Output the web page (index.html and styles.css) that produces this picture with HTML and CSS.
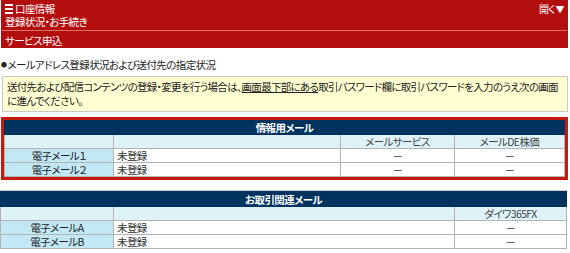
FILE: index.html
```html
<!DOCTYPE html>
<html lang="ja">

<head>
    <meta charset="UTF-8">
    <meta name="viewport" content="width=device-width, initial-scale=1.0">
    <title>登録状況・お手続き</title>
    <link rel="stylesheet" href="styles.css">
</head>

<body>
    <div class="hdr">
        <div class="hdrTop">
            <span class="menu"><i></i><i></i><i></i></span>
            <span class="hdrTitle">口座情報</span>
            <span class="open">開く<b>▼</b></span>
        </div>
        <div class="hdrSub">登録状況・お手続き</div>
        <div class="hdrLine"></div>
        <div class="hdrSub">サービス申込</div>
    </div>

    <p class="secTitle"><span class="dot">●</span>メールアドレス登録状況および送付先の指定状況</p>

    <div class="notice">
        送付先および配信コンテンツの登録・変更を行う場合は、<u>画面最下部にある</u>取引パスワード欄に取引パスワードを入力のうえ次の画面に進んでください。
    </div>

    <div class="redBox">
        <table class="mailTbl">
            <colgroup>
                <col class="w109">
                <col>
                <col class="w114">
                <col class="w110">
            </colgroup>
            <tr class="head">
                <th colspan="4">情報用メール</th>
            </tr>
            <tr class="sub">
                <td></td>
                <td></td>
                <td>メールサービス</td>
                <td>メールDE株価</td>
            </tr>
            <tr>
                <td class="label">電子メール１</td>
                <td>未登録</td>
                <td class="dash">－</td>
                <td class="dash">－</td>
            </tr>
            <tr>
                <td class="label">電子メール２</td>
                <td>未登録</td>
                <td class="dash">－</td>
                <td class="dash">－</td>
            </tr>
        </table>
    </div>

    <div class="grayBox">
        <table class="mailTbl">
            <colgroup>
                <col class="w113">
                <col>
                <col class="w112">
            </colgroup>
            <tr class="head">
                <th colspan="3">お取引関連メール</th>
            </tr>
            <tr class="sub">
                <td></td>
                <td></td>
                <td>ダイワ365FX</td>
            </tr>
            <tr>
                <td class="label">電子メールA</td>
                <td>未登録</td>
                <td class="dash">－</td>
            </tr>
            <tr>
                <td class="label">電子メールB</td>
                <td>未登録</td>
                <td class="dash">－</td>
            </tr>
        </table>
    </div>
</body>

</html>
```

FILE: styles.css
```css
* {
    padding: 0;
    margin: 0;
    box-sizing: border-box;
}

body {
    width: 570px;
    background: #fff;
    color: #333;
    font-family: "Noto Sans CJK JP", "Liberation Sans", sans-serif;
    font-size: 10.5px;
    line-height: 13px;
    letter-spacing: -0.6px;
    font-feature-settings: "palt";
    overflow: hidden;
}

/* ヘッダー */
.hdr {
    margin: 0 2px 0 1px;
    background-color: #b20e0e;
    color: #fff;
    padding: 2px 0 3px;
    height: 48px;
}

.hdrTop {
    display: flex;
    align-items: center;
    padding: 0 4px;
    height: 13px;
}

.menu {
    display: flex;
    flex-direction: column;
    gap: 2px;
    width: 8px;
    margin-right: 2px;
}

.menu i {
    display: block;
    height: 2px;
    background: #fff;
}

.hdrTitle {
    flex: 1;
}

.open {
    font-size: 10px;
}

.open b {
    font-size: 9px;
    margin-left: 1px;
}

.hdrSub {
    padding: 0 4px;
    height: 13px;
}

.hdrLine {
    height: 1px;
    background: #e0706c;
    margin: 2px 1px 3px;
}

/* 見出し */
.secTitle {
    margin: 10px 0 0 1px;
    height: 14px;
    color: #222;
}

.dot {
    font-size: 6px;
    vertical-align: 2px;
    margin-right: 1px;
}

.notice {
    margin: 4px 2px 0 2px;
    background: #ffffd2;
    border: 1px solid #c8c8c8;
    padding: 3px 4px 4px;
    color: #222;
    height: 36px;
    line-height: 14px;
    letter-spacing: -0.7px;
}

/* テーブル */
.redBox {
    margin: 5px 2px 0 1px;
    border: 3px solid #c41a0f;
}

.grayBox {
    margin: 10px 3px 0 0;
    border-top: 1px solid #ccc;
}

.mailTbl {
    width: 100%;
    border-collapse: collapse;
    table-layout: fixed;
}

.w109 {
    width: 109px;
}

.w110 {
    width: 110px;
}

.w112 {
    width: 112px;
}

.w113 {
    width: 113px;
}

.w114 {
    width: 114px;
}

.mailTbl th {
    background: #00345f;
    color: #fff;
    font-weight: bold;
    height: 13px;
    text-align: center;
    border: 1px solid #00345f;
}

.grayBox .mailTbl th {
    height: 15px;
}

.mailTbl td {
    border: 1px solid #b3b3b3;
    height: 14px;
    padding: 0 3px;
    background: #fff;
}

.mailTbl .sub td {
    background: #def2f8;
    text-align: center;
    color: #444;
}

.mailTbl td.label {
    background: #c2e8f5;
    text-align: center;
    color: #222;
}

.mailTbl td.dash {
    text-align: center;
}
```
